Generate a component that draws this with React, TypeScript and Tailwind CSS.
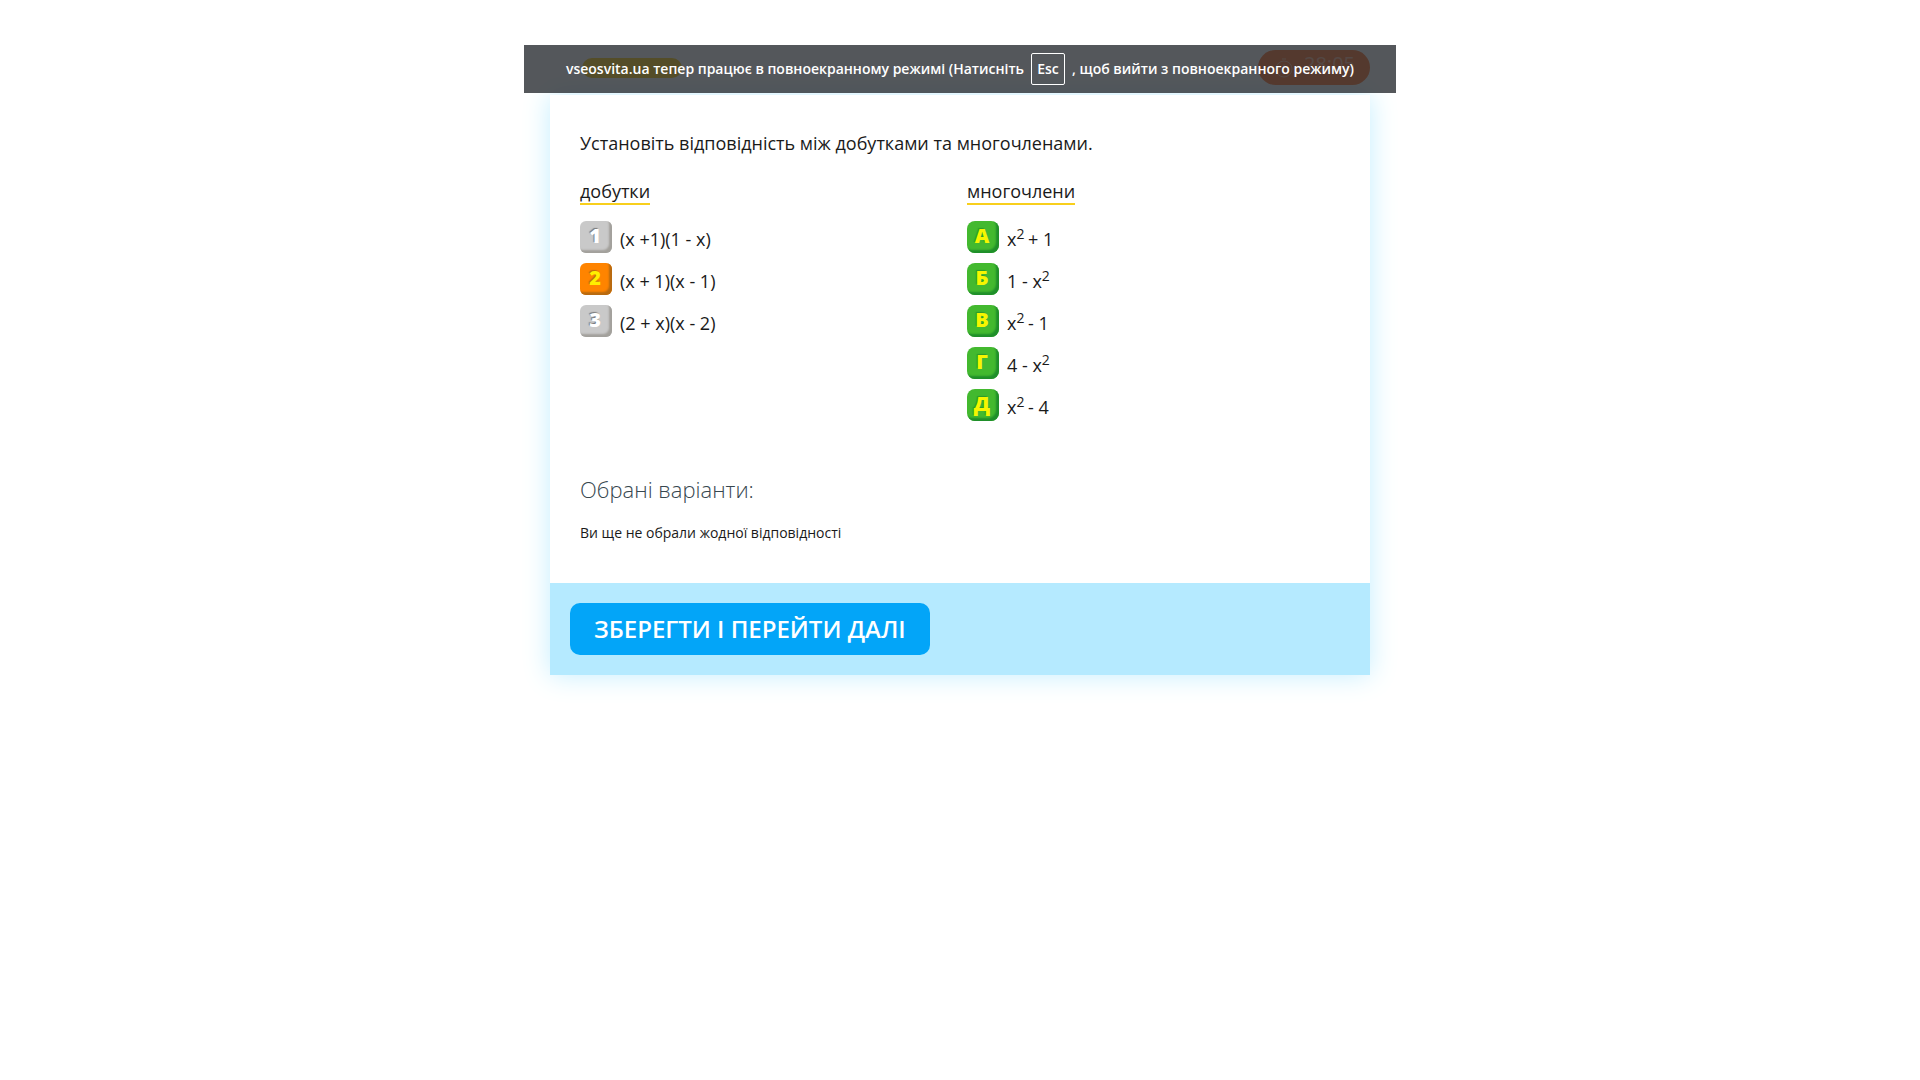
import { ReactNode } from 'react';
import clsx from 'clsx';

interface Option {
  label: string;
  content: ReactNode;
}

type Tone = 'gray' | 'orange' | 'green';

const products: Option[] = [
  { label: '1', content: '(x +1)(1 - x)' },
  { label: '2', content: '(x + 1)(x - 1)' },
  { label: '3', content: '(2 + x)(x - 2)' },
];

const polynomials: Option[] = [
  { label: 'А', content: <>x<Sup>2 </Sup>+ 1</> },
  { label: 'Б', content: <>1 - x<Sup>2</Sup></> },
  { label: 'В', content: <>x<Sup>2 </Sup>- 1</> },
  { label: 'Г', content: <>4 - x<Sup>2</Sup></> },
  { label: 'Д', content: <>x<Sup>2 </Sup>- 4</> },
];

const tones: Record<Tone, string> = {
  gray: 'rounded-md bg-[#c9c9c9] text-white shadow-[inset_-3px_-3px_2px_#a3a19c] [text-shadow:-1px_-1px_1px_#7a7a7a]',
  orange:
    'rounded-md bg-[#ff8400] text-[#ffee00] shadow-[inset_-3px_-3px_2px_#b86a10] [text-shadow:-1px_-1px_1px_#b86a10]',
  green:
    'rounded-lg bg-[#43b92f] text-[#f6f600] shadow-[inset_-3px_-3px_2px_#1f8f2a] [text-shadow:-1px_-1px_1px_#2c9a2a]',
};

function Sup({ children }: { children: ReactNode }) {
  return <sup className="text-sm">{children}</sup>;
}

const OptionRow = ({ option, tone }: { option: Option; tone: Tone }) => {
  const id = `option-${option.label}`;
  return (
    <li className="flex h-[42px] items-start">
      <button
        type="button"
        aria-labelledby={id}
        className={clsx(
          'h-8 w-8 shrink-0 pr-0.5 pb-0.5 text-xl leading-7 font-extrabold',
          tones[tone],
        )}
      >
        {option.label}
      </button>
      <span id={id} className="ml-2 text-lg leading-9">
        {option.content}
      </span>
    </li>
  );
};

const Column = ({ title, children }: { title: string; children: ReactNode }) => {
  return (
    <div className="flex-1">
      <h2 className="inline-block border-b-2 border-[#f8cf1c] text-lg leading-6">{title}</h2>
      <ul className="mt-4">{children}</ul>
    </div>
  );
};

const FullscreenNotice = () => {
  return (
    <div
      role="status"
      className="absolute top-[45px] left-1/2 flex h-12 w-[872px] -translate-x-1/2 items-center justify-center bg-[#292d32]/80 text-sm font-semibold whitespace-nowrap text-white"
    >
      <span>vseosvita.ua тепер працює в повноекранному режимі (Натисніть</span>
      <kbd className="mx-[7px] flex h-8 w-[34px] items-center justify-center rounded-xs border border-white font-['Open_Sans',sans-serif]">
        Esc
      </kbd>
      <span>, щоб вийти з повноекранного режиму)</span>
    </div>
  );
};

const App = () => {
  return (
    <div className="relative min-h-screen bg-white pt-[50px] font-['Open_Sans',sans-serif] text-[#1a1a1a]">
      <main className="mx-auto max-w-[820px]">
        <header className="flex h-[35px] items-center justify-between pl-8">
          <div className="h-5 w-[100px] rounded-full bg-[#ffcc00]" />
          <div className="flex h-full w-28 items-center gap-2.5 rounded-full bg-[#ff6a1f] pl-4 text-xl text-white/50">
            <svg viewBox="0 0 20 20" className="h-5 w-5" fill="none" stroke="currentColor">
              <circle cx="10" cy="11" r="8" />
              <path d="M10 11V6M8 1h4" />
            </svg>
            <time className="pb-2">28:05</time>
          </div>
        </header>

        <section className="mt-2.5 shadow-[0_0_26px_#c4eeff]">
          <div className="bg-white px-[30px] pt-9 pb-[38px]">
            <h1 className="text-lg leading-6">
              Установіть відповідність між добутками та многочленами.
            </h1>
            <div className="mt-6 flex gap-[14px]">
              <Column title="добутки">
                {products.map((option) => (
                  <OptionRow
                    key={option.label}
                    option={option}
                    tone={option.label === '2' ? 'orange' : 'gray'}
                  />
                ))}
              </Column>
              <Column title="многочлени">
                {polynomials.map((option) => (
                  <OptionRow key={option.label} option={option} tone="green" />
                ))}
              </Column>
            </div>
            <h2 className="mt-[42px] text-[22px] leading-8 font-light text-[#37474f]">
              Обрані варіанти:
            </h2>
            <p className="mt-4 text-sm leading-6">Ви ще не обрали жодної відповідності</p>
          </div>
          <footer className="bg-[#b5eaff] p-5">
            <button
              type="button"
              className="block h-[52px] rounded-[10px] bg-[#03a5f8] px-6 text-2xl font-semibold text-white uppercase"
            >
              Зберегти і перейти далі
            </button>
          </footer>
        </section>
      </main>
      <FullscreenNotice />
    </div>
  );
};

export default App;
